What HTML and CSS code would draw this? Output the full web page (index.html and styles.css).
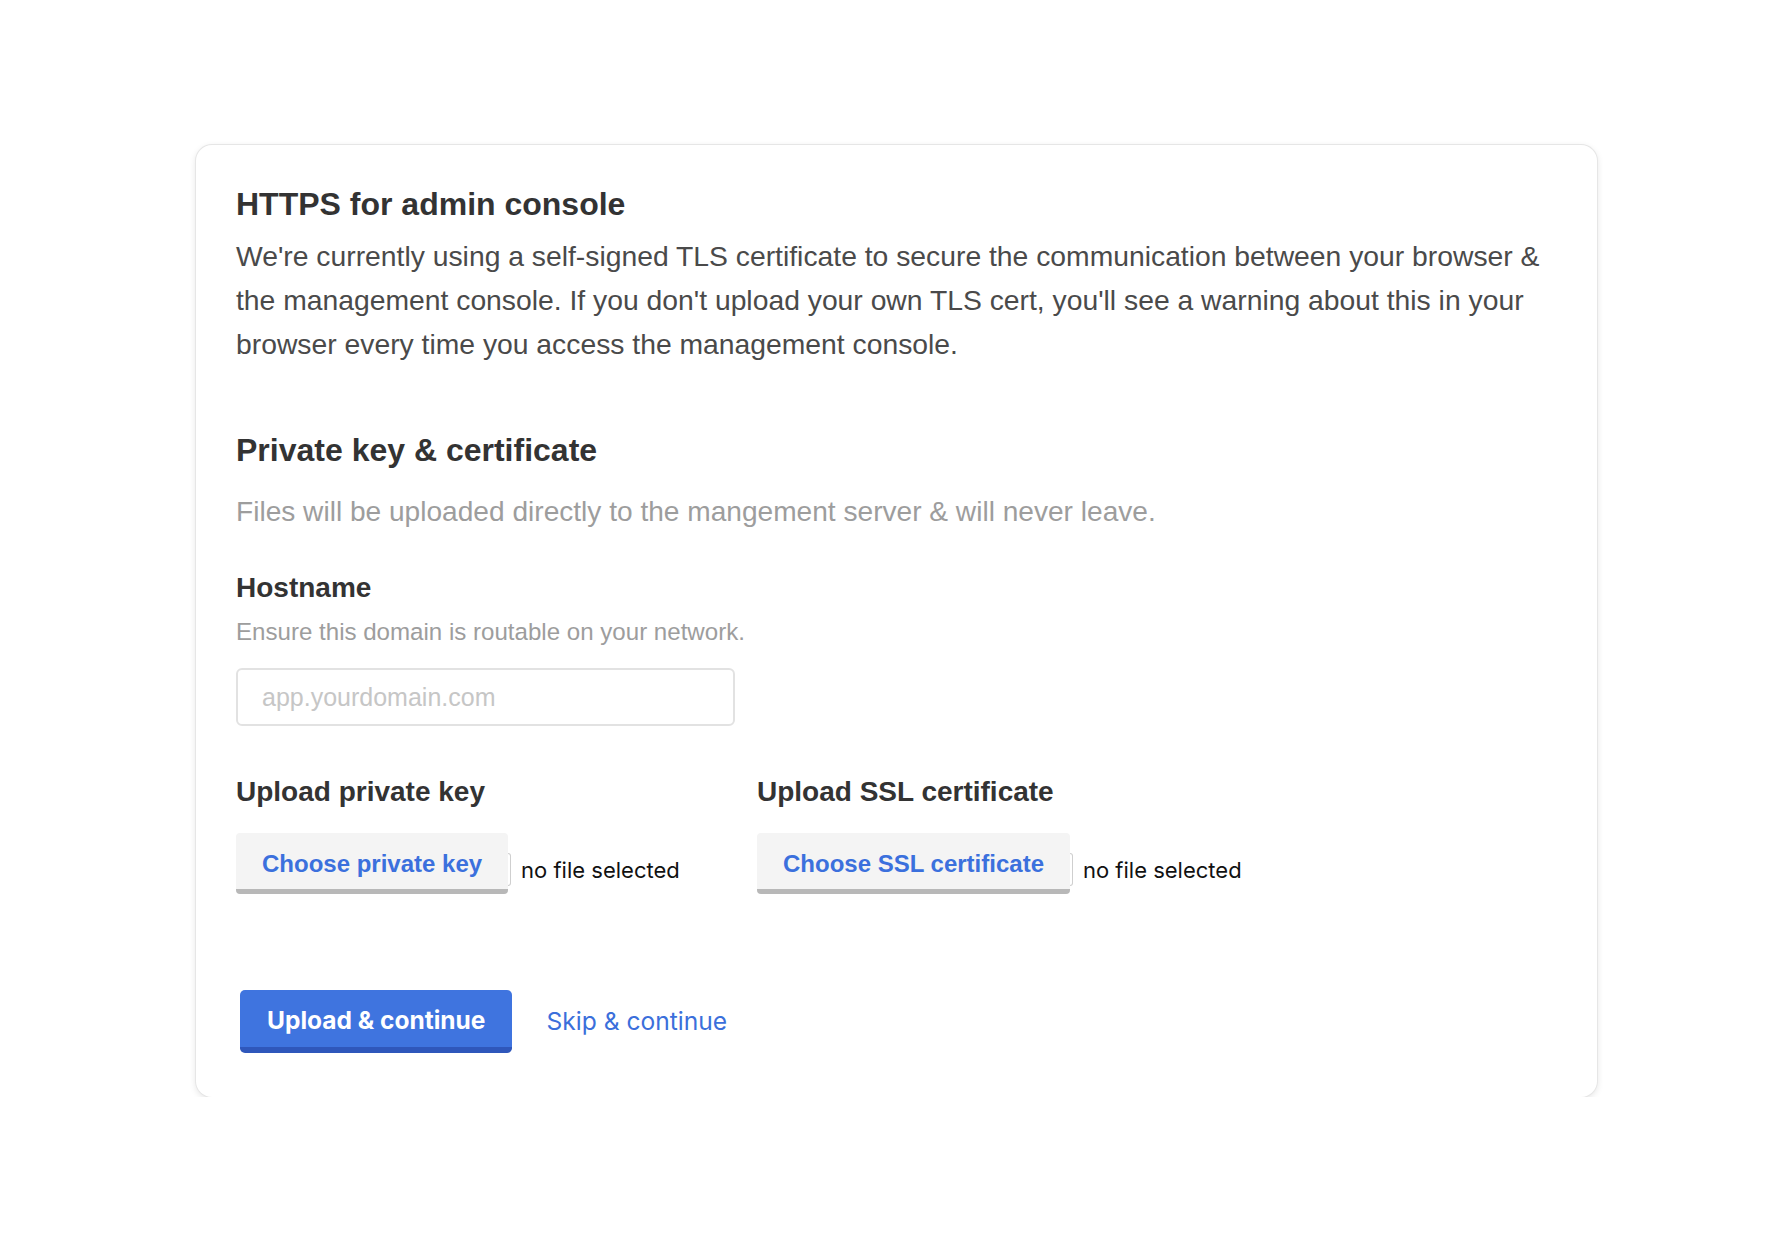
FILE: index.html
```html
<!DOCTYPE html>
<html lang="en">
<head>
<meta charset="utf-8">
<title>HTTPS for admin console</title>
<link rel="stylesheet" href="styles.css">
</head>
<body>
<main class="card">
  <h1 class="title">HTTPS for admin console</h1>
  <p class="intro">We're currently using a self-signed TLS certificate to secure the communication between your browser &amp; the management console. If you don't upload your own TLS cert, you'll see a warning about this in your browser every time you access the management console.</p>

  <h2 class="section-title">Private key &amp; certificate</h2>
  <p class="section-desc">Files will be uploaded directly to the mangement server &amp; will never leave.</p>

  <div class="field">
    <label class="field-label" for="hostname">Hostname</label>
    <p class="field-help">Ensure this domain is routable on your network.</p>
    <input class="text-input" id="hostname" type="text" placeholder="app.yourdomain.com">
  </div>

  <div class="uploads">
    <div class="upload">
      <div class="field-label">Upload private key</div>
      <div class="file-row">
        <span class="file-btn">Choose private key</span>
        <span class="file-edge"></span>
        <span class="file-status">no file selected</span>
      </div>
    </div>
    <div class="upload">
      <div class="field-label">Upload SSL certificate</div>
      <div class="file-row">
        <span class="file-btn">Choose SSL certificate</span>
        <span class="file-edge"></span>
        <span class="file-status">no file selected</span>
      </div>
    </div>
  </div>

  <div class="actions">
    <button class="primary-btn" type="button">Upload &amp; continue</button>
    <a class="skip-link" href="#">Skip &amp; continue</a>
  </div>
</main>
</body>
</html>
```

FILE: styles.css
```css
html, body {
  margin: 0;
  padding: 0;
  background: #ffffff;
}

body {
  font-family: "Liberation Sans", Arial, Helvetica, sans-serif;
  color: #333333;
}

.card {
  box-sizing: border-box;
  width: 1401px;
  margin: 145px 0 0 196px;
  padding: 40px 40px 44px 40px;
  background: #ffffff;
  border-radius: 16px;
  box-shadow: 0 0 0 1px #e6e6e6, 0 2px 7px rgba(0, 0, 0, 0.12);
}

.title {
  margin: 0;
  font-size: 32px;
  line-height: 38px;
  font-weight: 700;
  color: #333333;
}

.intro {
  margin: 11px 0 0 0;
  font-size: 28.3px;
  line-height: 44px;
  color: #4a4a4a;
}

.section-title {
  margin: 65px 0 0 0;
  font-size: 32px;
  line-height: 38px;
  font-weight: 700;
  color: #333333;
}

.section-desc {
  margin: 21px 0 0 0;
  font-size: 28.1px;
  line-height: 44px;
  color: #9d9d9d;
}

.field {
  margin-top: 37px;
}

.field-label {
  display: block;
  font-size: 28px;
  line-height: 34px;
  font-weight: 700;
  color: #333333;
}

.field-help {
  margin: 9px 0 0 0;
  font-size: 24.1px;
  line-height: 36px;
  color: #9d9d9d;
}

.text-input {
  display: block;
  box-sizing: border-box;
  width: 499px;
  height: 58px;
  margin-top: 18px;
  padding: 0 24px;
  border: 2px solid #e2e2e2;
  border-radius: 6px;
  font-family: "Liberation Sans", Arial, Helvetica, sans-serif;
  font-size: 25px;
  color: #333333;
  background: #ffffff;
  outline: none;
}

.text-input::placeholder {
  color: #c6c6c6;
}

.uploads {
  display: flex;
  margin-top: 49px;
}

.upload {
  width: 521px;
}

.file-row {
  display: flex;
  align-items: flex-start;
  margin-top: 24px;
}

.file-btn {
  box-sizing: border-box;
  height: 61px;
  padding: 6px 26px 0 26px;
  line-height: 50px;
  font-size: 24px;
  font-weight: 700;
  color: #3b70dd;
  background: #f4f4f4;
  border-bottom: 5px solid #b8b8b8;
  border-radius: 4px;
  white-space: nowrap;
}

.file-edge {
  box-sizing: border-box;
  width: 3px;
  height: 33px;
  margin-top: 20px;
  border: 1px solid #cfcfcf;
  border-left: none;
  border-radius: 0 6px 6px 0;
}

.file-status {
  margin: 22px 0 0 10px;
  font-family: Inter, "Liberation Sans", sans-serif;
  font-size: 22px;
  line-height: 30px;
  color: #111111;
  white-space: nowrap;
}

.actions {
  display: flex;
  align-items: flex-start;
  margin-top: 96px;
  padding-left: 4px;
}

.primary-btn {
  box-sizing: border-box;
  height: 63px;
  padding: 4px 27px 0 27px;
  line-height: 53px;
  font-family: Inter, "Liberation Sans", sans-serif;
  font-size: 24.5px;
  font-weight: 700;
  color: #ffffff;
  background: #3f74df;
  border: none;
  border-bottom: 6px solid #2f57bb;
  border-radius: 5px;
  cursor: pointer;
}

.skip-link {
  margin: 16px 0 0 34px;
  font-family: Inter, "Liberation Sans", sans-serif;
  font-size: 24.6px;
  line-height: 30px;
  color: #3b6fdb;
  text-decoration: none;
}
```
